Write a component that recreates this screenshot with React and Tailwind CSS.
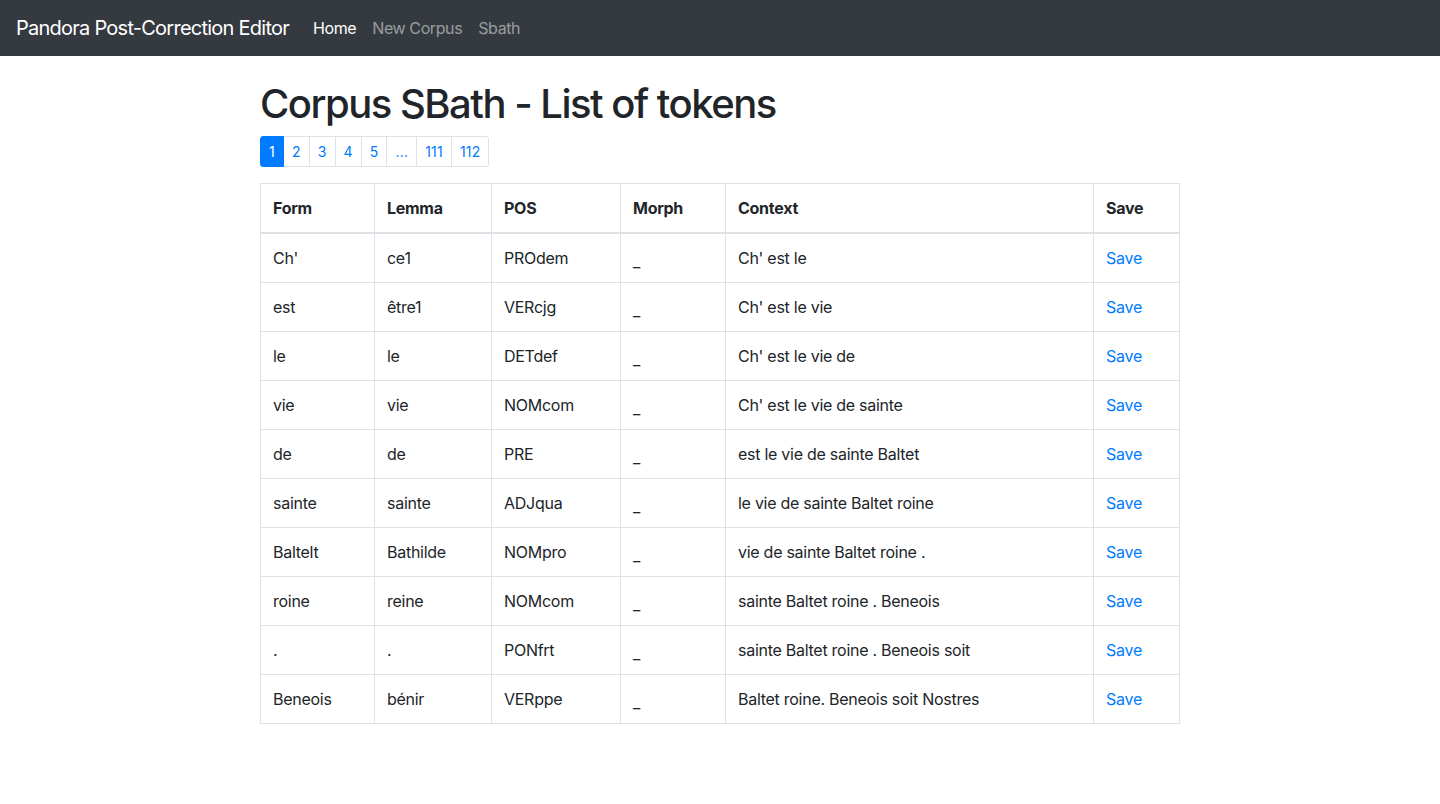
import React from "react";

const rows = [
  ["Ch'", "ce1", "PROdem", "Ch' est le"],
  ["est", "être1", "VERcjg", "Ch' est le vie"],
  ["le", "le", "DETdef", "Ch' est le vie de"],
  ["vie", "vie", "NOMcom", "Ch' est le vie de sainte"],
  ["de", "de", "PRE", "est le vie de sainte Baltet"],
  ["sainte", "sainte", "ADJqua", "le vie de sainte Baltet roine"],
  ["Baltelt", "Bathilde", "NOMpro", "vie de sainte Baltet roine ."],
  ["roine", "reine", "NOMcom", "sainte Baltet roine . Beneois"],
  [".", ".", "PONfrt", "sainte Baltet roine . Beneois soit"],
  ["Beneois", "bénir", "VERppe", "Baltet roine. Beneois soit Nostres"],
];

const pages = ["1", "2", "3", "4", "5", "...", "111", "112"];

const cols = [
  ["Form", "w-[114px]"],
  ["Lemma", "w-[117px]"],
  ["POS", "w-[129px]"],
  ["Morph", "w-[105px]"],
  ["Context", "w-[368px]"],
  ["Save", "w-[86px]"],
];

export default function App() {
  return (
    <div className="min-h-screen bg-white text-[#212529] font-['Inter','Liberation_Sans',sans-serif]">
      {/* Navbar */}
      <nav className="h-14 bg-[#343a40] flex items-center px-4">
        <a className="text-white text-[20px] leading-[30px] mr-4 tracking-[-0.75px]">
          Pandora Post-Correction Editor
        </a>
        <div className="flex text-[16px] leading-6 tracking-[-0.4px]">
          <a className="px-2 text-white">Home</a>
          <a className="px-2 text-white/50">New Corpus</a>
          <a className="px-2 text-white/50">Sbath</a>
        </div>
      </nav>

      <div className="w-[920px] mx-auto pt-6">
        <h1 className="text-[40px] leading-[48px] font-medium mb-2 tracking-[-1.5px]">
          Corpus SBath - List of tokens
        </h1>

        {/* Pagination */}
        <ul className="flex mb-4 text-[14px] leading-[21px] tracking-[0.2px]">
          {pages.map((p, i) => (
            <li key={p} className={i === 0 ? "" : "-ml-px"}>
              <a
                className={
                  "block px-2 py-1 border " +
                  (i === 0
                    ? "bg-[#007bff] border-[#007bff] text-white rounded-l-[3px] relative z-10"
                    : "bg-white border-[#dee2e6] text-[#007bff]") +
                  (i === pages.length - 1 ? " rounded-r-[3px]" : "")
                }
              >
                {p}
              </a>
            </li>
          ))}
        </ul>

        {/* Token table */}
        <table className="w-[919px] table-fixed border-collapse text-[16px] leading-6 tracking-[-0.27px]">
          <thead>
            <tr>
              {cols.map(([label, w]) => (
                <th
                  key={label}
                  className={`${w} text-left font-bold p-3 border border-[#dee2e6] border-b-2`}
                >
                  {label}
                </th>
              ))}
            </tr>
          </thead>
          <tbody>
            {rows.map(([form, lemma, pos, ctx], i) => (
              <tr key={i}>
                <td className="p-3 border border-[#dee2e6]">{form}</td>
                <td className="p-3 border border-[#dee2e6]">{lemma}</td>
                <td className="p-3 border border-[#dee2e6]">{pos}</td>
                <td className="p-3 border border-[#dee2e6]">
                  <span className="relative top-[3px]">_</span>
                </td>
                <td className="p-3 border border-[#dee2e6]">{ctx}</td>
                <td className="p-3 border border-[#dee2e6]">
                  <a className="text-[#007bff]">Save</a>
                </td>
              </tr>
            ))}
          </tbody>
        </table>
      </div>
    </div>
  );
}
